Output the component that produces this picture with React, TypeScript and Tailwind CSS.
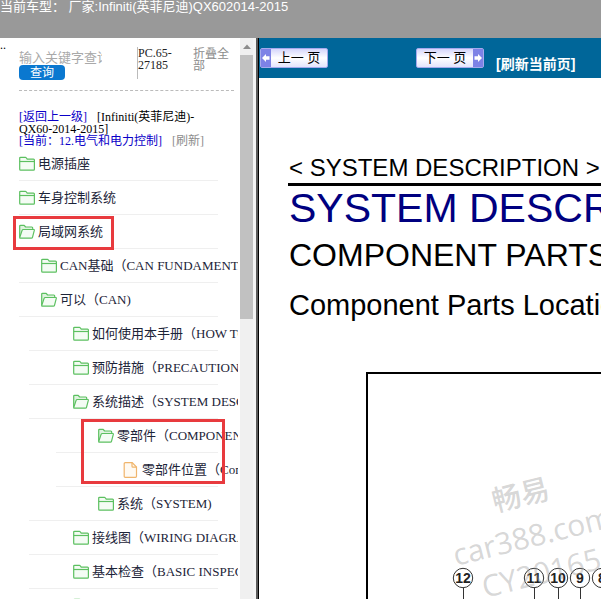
import type { ReactNode } from "react";

type IconKind = "closed" | "open" | "file";

const rows: { label: string; icon: IconKind; line: string; indent: string }[] = [
  { label: "电源插座", icon: "closed", line: "ml-[19px]", indent: "pl-0" },
  { label: "车身控制系统", icon: "closed", line: "ml-[19px]", indent: "pl-0" },
  { label: "局域网系统", icon: "open", line: "ml-[19px]", indent: "pl-0" },
  { label: "CAN基础（CAN FUNDAMENTAL）", icon: "closed", line: "ml-[19px]", indent: "pl-[22px]" },
  { label: "可以（CAN)", icon: "open", line: "ml-[19px]", indent: "pl-[22px]" },
  { label: "如何使用本手册（HOW TO", icon: "closed", line: "ml-[29px]", indent: "pl-11" },
  { label: "预防措施（PRECAUTION）", icon: "closed", line: "ml-[29px]", indent: "pl-11" },
  { label: "系统描述（SYSTEM DESC", icon: "open", line: "ml-[29px]", indent: "pl-11" },
  { label: "零部件（COMPONENT", icon: "open", line: "ml-[56px]", indent: "pl-[42px]" },
  { label: "零部件位置（Com", icon: "file", line: "ml-[56px]", indent: "pl-[67px]" },
  { label: "系统（SYSTEM)", icon: "closed", line: "ml-[29px]", indent: "pl-[69px]" },
  { label: "接线图（WIRING DIAGRA", icon: "closed", line: "ml-[29px]", indent: "pl-11" },
  { label: "基本检查（BASIC INSPEC", icon: "closed", line: "ml-[29px]", indent: "pl-11" },
  { label: "", icon: "closed", line: "ml-[29px]", indent: "pl-11" },
];

const callouts = [
  { n: 12, x: 95 },
  { n: 11, x: 166 },
  { n: 10, x: 190 },
  { n: 9, x: 212 },
  { n: 8, x: 234 },
];

function TreeIcon({ kind }: { kind: IconKind }) {
  if (kind === "file") {
    return (
      <svg width="16" height="16" viewBox="0 0 16 16" fill="#fffaf2" stroke="#f0b56c" strokeWidth="1.2" className="shrink-0">
        <path d="M1.2 1.7q0-1 1-1H9.200L13.500 5v9.3q0 1-1 1H2.200q-1 0-1-1z" />
        <path d="M9 .8v3.500q0 .9.9.9h3.600" fill="none" />
      </svg>
    );
  }
  return (
    <svg width="16" height="16" viewBox="0 0 16 16" fill="#f4fcf4" stroke="#5cc060" strokeWidth="1.2" strokeLinejoin="round" className="shrink-0">
      {kind === "closed" ? (
        <>
          <path d="M.7 2.200q0-.9.9-.9h4.800q.7 0 1 .7l.8 1.200h6.300q.9 0 .9.9v9.200q0 .9-.9.9H1.600q-.9 0-.9-.9z" />
          <path d="M.7 5.500h14.600" />
        </>
      ) : (
        <>
          <path d="M.7 13.300V2.200q0-.9.9-.9h3.600l1.400 1.700h6.200q.9 0 .9.900v1.600" fill="#dff3df" />
          <path d="M1.300 14.200q-.8 0-.5-.9L3.100 6.400q.3-.9 1.200-.9h10.200q1 0 .8.9l-1.800 6.900q-.2.900-1.200.9z" />
        </>
      )}
    </svg>
  );
}

function PageButton({ children, dir }: { children: ReactNode; dir: "prev" | "next" }) {
  const arrow = (
    <span className="flex w-[10px] items-center justify-center bg-[#7d82e6]">
      <svg width="8" height="8" viewBox="0 0 8 8" fill="white" className={dir === "next" ? "rotate-180" : ""}>
        <path d="M0 4 4 0v2.200h3.500v3.600H4V8z" />
      </svg>
    </span>
  );
  return (
    <button
      type="button"
      className="flex h-5 w-[68px] shrink-0 rounded-xs border border-[#a5a9ec] bg-linear-to-b from-[#d5d6fb] via-white to-[#e3e4fc] text-[13px] text-black"
    >
      {dir === "prev" && arrow}
      <span className="flex-1 text-center leading-[18px] whitespace-nowrap">{children}</span>
      {dir === "next" && arrow}
    </button>
  );
}

function Sidebar() {
  return (
    <aside className="flex w-[259px] shrink-0 overflow-hidden font-['Liberation_Serif','Noto_Sans_CJK_SC',serif]">
      <div className="w-[238px] shrink-0 overflow-hidden">
        <div className="flex h-[52px] pt-[9px] text-xs leading-3">
          <span className="-mt-2 w-[19px] shrink-0">..</span>
          <form className="w-[118px] shrink-0" onSubmit={(e) => e.preventDefault()}>
            <input
              aria-label="关键字"
              placeholder="输入关键字查询"
              className="block h-[18px] w-[83px] font-['Noto_Sans_CJK_SC',sans-serif] text-[13px] outline-none placeholder:text-[#a9a9a9]"
            />
            <button type="submit" className="block h-[15px] w-[46px] rounded-sm bg-[#0a78d0] text-xs leading-[14px] text-white">
              查询
            </button>
          </form>
          <span className="h-8 w-14 shrink-0 border-l border-[#bbb] text-[#222]">
            PC.65-
            <br />
            27185
          </span>
          <a href="#fold" className="mt-px w-[38px] text-[#8c8c8c]">
            折叠全部
          </a>
        </div>
        <div className="mr-1 ml-[19px] border-b border-dashed border-[#bbb]" />
        <div className="mt-5 ml-[19px] text-xs leading-3 text-black">
          <a href="#up" className="text-[#0a00c8]">[返回上一级]</a>
          <span className="ml-[10px]">[Infiniti(英菲尼迪)-</span>
          <br />
          QX60-2014-2015]
          <br />
          <a href="#current" className="text-[#0a00c8]">[当前：12.电气和电力控制]</a>
          <a href="#refresh" className="ml-[10px] text-[#8c8c8c]">[刷新]</a>
        </div>
        <ul className="relative text-[13px] text-[#1c2438]">
          {rows.map((row, i) => (
            <li key={i} className={`${row.line} mr-5 h-[34px] border-b border-[#efefef]`}>
              <a href="#doc" className={`${row.indent} flex h-full items-center gap-[3px] whitespace-nowrap`}>
                <TreeIcon kind={row.icon} />
                {row.label}
              </a>
            </li>
          ))}
          <li aria-hidden className="pointer-events-none absolute top-[69px] left-[13px] h-[34px] w-[101px] border-3 border-[#e83a3e]" />
          <li aria-hidden className="pointer-events-none absolute top-[272px] left-[81px] h-[65px] w-36 border-3 border-[#e83a3e]" />
        </ul>
      </div>
      <div className="ml-[2px] flex w-[13px] shrink-0 flex-col items-center bg-[#f0f0f0]">
        <svg width="8" height="17" viewBox="0 0 8 17" fill="#8c8c8c">
          <path d="M0 11 4 6.500 8 11z" />
        </svg>
        <div className="h-[264px] w-full bg-[#c1c1c1]" />
      </div>
      <div className="w-[3px] bg-[#f4f4f4]" />
      <div className="w-[3px] border-r border-black bg-[#5a5a5a]" />
    </aside>
  );
}

function Diagram() {
  return (
    <svg width="600" height="400" className="block max-w-none" fontFamily="'Liberation Sans', Arial, sans-serif">
      <g stroke="#333" strokeWidth="1" fill="white">
        {callouts.map((c) => (
          <g key={c.n}>
            <path d={`M${c.x + 0.5} 214v180`} />
            <circle cx={c.x} cy="204" r="9.700" />
          </g>
        ))}
      </g>
      <g fontSize="14" fontWeight="700" fill="#222" textAnchor="middle">
        {callouts.map((c) => (
          <text key={c.n} x={c.x} y="209">{c.n}</text>
        ))}
      </g>
      <g fill="#999" fillOpacity="0.4" fontWeight="500" fontFamily="'Open Sans', 'Noto Sans CJK SC', sans-serif">
        <text fontSize="29" transform="translate(127 138) rotate(-14)">畅易</text>
        <text fontSize="30" transform="translate(88 192) rotate(-14)">car388.com</text>
        <text fontSize="30" transform="translate(117 224) rotate(-14)">CY20165</text>
      </g>
    </svg>
  );
}

export default function App() {
  return (
    <div className="flex h-screen flex-col overflow-hidden bg-white font-['Liberation_Sans','Noto_Sans_CJK_SC',sans-serif]">
      <header className="h-[38px] shrink-0 bg-[#999] text-[13px] leading-[13px] whitespace-nowrap text-white">
        当前车型： 厂家:Infiniti(英菲尼迪)QX602014-2015
      </header>
      <div className="flex min-h-0 flex-1">
        <Sidebar />
        <main className="flex min-w-0 flex-1 flex-col overflow-hidden">
          <nav className="flex h-10 shrink-0 items-center bg-[#069] pl-px">
            <PageButton dir="prev">上一 页</PageButton>
            <div className="w-[88px] shrink-0" />
            <PageButton dir="next">下一 页</PageButton>
            <a href="#reload" className="mt-3 ml-3 text-sm font-bold whitespace-nowrap text-white">
              [刷新当前页]
            </a>
          </nav>
          <article className="flex min-h-0 flex-1 flex-col pt-[75px] pl-[29px] whitespace-nowrap text-black">
            <p className="border-b-3 border-black pl-px text-2xl leading-[30px]">&lt; SYSTEM DESCRIPTION &gt;</p>
            <h1 className="mt-px pl-px text-[41px] leading-[42px] text-[#000080]">SYSTEM DESCRIPTION</h1>
            <h2 className="mt-2 pl-px text-[32px] leading-9">COMPONENT PARTS</h2>
            <h3 className="mt-4 pl-px text-[29px] leading-8">Component Parts Location</h3>
            <div className="mt-[51px] ml-[78px] min-h-0 flex-1 overflow-hidden border-t-2 border-l-2 border-black">
              <Diagram />
            </div>
          </article>
        </main>
      </div>
    </div>
  );
}
